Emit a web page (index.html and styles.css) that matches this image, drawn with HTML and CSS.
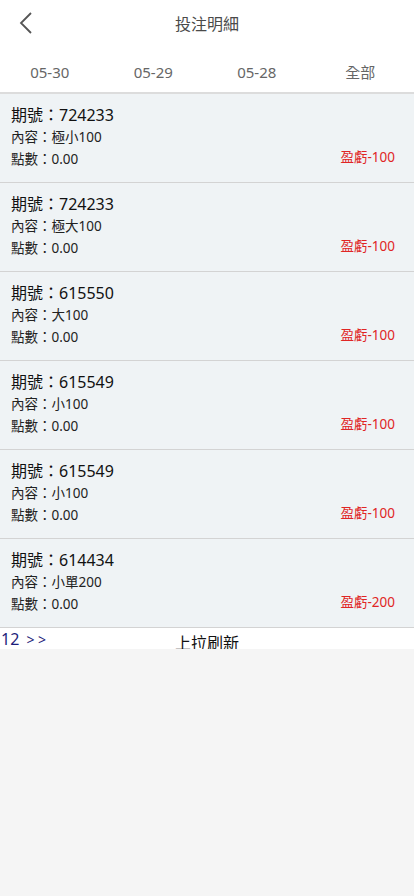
FILE: index.html
```html
<!DOCTYPE html>
<html lang="zh-Hant">
<head>
<meta charset="utf-8">
<title>投注明細</title>
<link rel="stylesheet" href="styles.css">
</head>
<body>
<header class="topbar">
  <span class="back"><svg width="14" height="22" viewBox="0 0 14 22"><path d="M12 1 L2 11 L12 21" fill="none" stroke="#555" stroke-width="1.8"/></svg></span>
  <h1 class="title">投注明細</h1>
</header>
<nav class="tabs">
  <span class="tab">05-30</span>
  <span class="tab">05-29</span>
  <span class="tab">05-28</span>
  <span class="tab">全部</span>
</nav>
<ul class="list">
  <li class="item"><div class="no">期號：724233</div><div class="line">內容：極小100</div><div class="line row"><span>點數：0.00</span><span class="loss">盈虧-100</span></div></li>
  <li class="item"><div class="no">期號：724233</div><div class="line">內容：極大100</div><div class="line row"><span>點數：0.00</span><span class="loss">盈虧-100</span></div></li>
  <li class="item"><div class="no">期號：615550</div><div class="line">內容：大100</div><div class="line row"><span>點數：0.00</span><span class="loss">盈虧-100</span></div></li>
  <li class="item"><div class="no">期號：615549</div><div class="line">內容：小100</div><div class="line row"><span>點數：0.00</span><span class="loss">盈虧-100</span></div></li>
  <li class="item"><div class="no">期號：615549</div><div class="line">內容：小100</div><div class="line row"><span>點數：0.00</span><span class="loss">盈虧-100</span></div></li>
  <li class="item"><div class="no">期號：614434</div><div class="line">內容：小單200</div><div class="line row"><span>點數：0.00</span><span class="loss">盈虧-200</span></div></li>
</ul>
<div class="footer">
  <span class="pager">12 <small>&gt; &gt;</small></span>
  <span class="refresh">上拉刷新</span>
  <span></span>
</div>
</body>
</html>
```
FILE: styles.css
```css
html, body {
  margin: 0;
  padding: 0;
  background: #f5f5f5;
  font-family: "Noto Sans", "Noto Sans CJK TC", sans-serif;
  color: #222;
}
.topbar {
  height: 50px;
  background: #fff;
  display: flex;
  align-items: center;
  justify-content: center;
  position: relative;
}
.back {
  position: absolute;
  left: 19px;
  top: 12px;
  width: 14px;
  height: 22px;
}
.back svg { display: block; }
.title {
  margin: 0;
  font-size: 16px;
  font-weight: normal;
  color: #4a4a4a;
  line-height: 22px;
  margin-top: -3px;
}
.tabs {
  height: 42px;
  background: #fff;
  display: grid;
  grid-template-columns: repeat(4, 1fr);
  align-items: center;
  border-bottom: 2px solid #dcdcdc;
}
.tab {
  text-align: center;
  font-size: 15px;
  color: #666;
  line-height: 20px;
  padding-top: 2px;
  margin-left: -4px;
}
.list {
  list-style: none;
  margin: 0;
  padding: 0;
}
.item {
  background: #eff3f5;
  border-bottom: 1px solid #d3d3d3;
  padding: 10px 19px 12px 11px;
}
.no {
  font-size: 16px;
  line-height: 22px;
  color: #111;
}
.line {
  font-size: 13.5px;
  line-height: 22px;
  color: #222;
}
.row {
  display: flex;
  justify-content: space-between;
}
.loss {
  color: #e02525;
  font-size: 13.5px;
  margin-top: -2px;
}
.footer {
  height: 21px;
  overflow: hidden;
  background: #fff;
  display: grid;
  grid-template-columns: 1fr auto 1fr;
  align-items: start;
}
.pager {
  color: #1d1d7a;
  font-size: 16px;
  line-height: 22px;
  padding-left: 1px;
}
.pager small {
  font-size: 14px;
  margin-left: 3px;
}
.refresh {
  font-size: 16px;
  color: #111;
  line-height: 22px;
  padding-top: 4px;
}
```
